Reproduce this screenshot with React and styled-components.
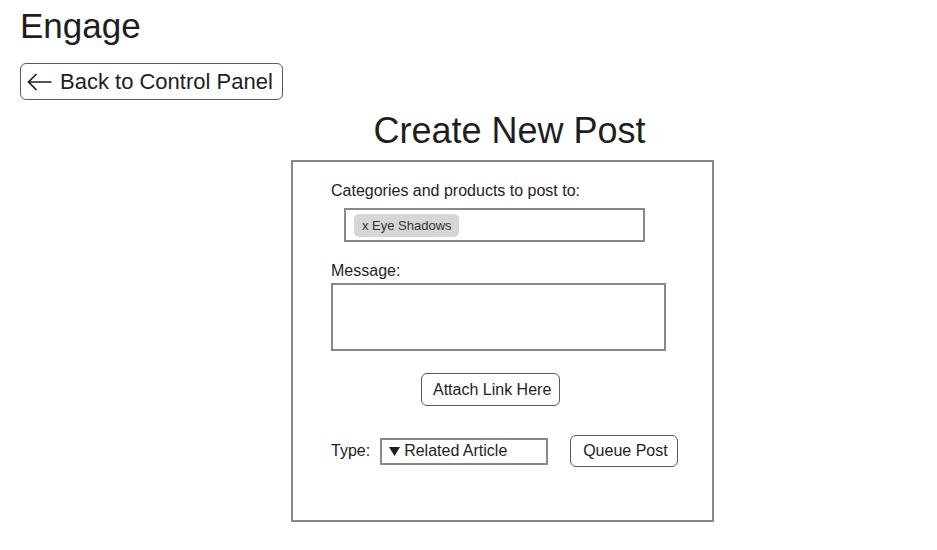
import React from "react";
import styled, { createGlobalStyle } from "styled-components";

const GlobalStyle = createGlobalStyle`
  body {
    margin: 0;
    background: #ffffff;
    font-family: "Liberation Sans", Arial, sans-serif;
    color: #1e1e1e;
  }
`;

const Page = styled.div`
  width: 937px;
  height: 550px;
  padding: 6px 0 0 20px;
  box-sizing: border-box;
`;

const Heading = styled.h1`
  margin: 0;
  font-size: 35px;
  line-height: 40px;
  font-weight: 400;
`;

const OutlineButton = styled.button`
  display: inline-flex;
  align-items: center;
  gap: ${props => props.gap || 0}px;
  box-sizing: border-box;
  height: ${props => props.h}px;
  padding: 0 ${props => props.pr}px 0 ${props => props.pl}px;
  border: 1px solid #5a5a5a;
  border-radius: 6px;
  background: #ffffff;
  color: #1e1e1e;
  font-family: "Liberation Sans", Arial, sans-serif;
  font-size: ${props => props.size}px;
  cursor: pointer;
`;

const BackRow = styled.div`
  margin-top: 17px;
  display: flex;
`;

const Main = styled.div`
  margin-top: 10px;
  padding-left: 271px;
  display: flex;
  flex-direction: column;
`;

const Title = styled.h2`
  margin: 0;
  width: 423px;
  padding-left: 14px;
  box-sizing: border-box;
  text-align: center;
  font-size: 36px;
  line-height: 42px;
  font-weight: 400;
`;

const Panel = styled.div`
  margin-top: 8px;
  width: 423px;
  height: 362px;
  box-sizing: border-box;
  border: 2px solid #888888;
  padding: 20px 0 0 38px;
  display: flex;
  flex-direction: column;
`;

const Label = styled.div`
  font-size: 16px;
  line-height: 18px;
  margin-top: ${props => props.top || 0}px;
`;

const TagBox = styled.div`
  margin: 8px 0 0 13px;
  width: 301px;
  height: 34px;
  box-sizing: border-box;
  border: 2px solid #888888;
  padding: 4px 8px;
  display: flex;
  align-items: flex-start;
`;

const Chip = styled.span`
  display: inline-flex;
  align-items: center;
  height: 23px;
  padding: 0 7px 0 8px;
  border-radius: 5px;
  background: #d6d6d6;
  color: #333333;
  font-size: 13px;
`;

const MessageBox = styled.div`
  margin-top: 3px;
  width: 335px;
  height: 68px;
  box-sizing: border-box;
  border: 2px solid #888888;
`;

const AttachRow = styled.div`
  margin-top: 22px;
  padding-left: 90px;
  display: flex;
`;

const TypeRow = styled.div`
  margin-top: 29px;
  display: flex;
  align-items: center;
  font-size: 16px;
`;

const Select = styled.div`
  margin-left: 10px;
  width: 168px;
  height: 27px;
  box-sizing: border-box;
  border: 2px solid #888888;
  padding-left: 7px;
  display: flex;
  align-items: center;
  gap: 4px;
  font-size: 16px;
`;

const QueueWrap = styled.div`
  margin-left: 22px;
  display: flex;
`;

const ArrowIcon = () => (
  <svg width="25" height="18" viewBox="0 0 25 18">
    <path d="M1.5 9 H24.5 M9.5 1 L1.5 9 L9.5 17" fill="none" stroke="#1e1e1e" strokeWidth="1.7" />
  </svg>
);

const Caret = () => (
  <svg width="11" height="9" viewBox="0 0 11 9">
    <path d="M0 0 H11 L5.5 9 Z" fill="#1e1e1e" />
  </svg>
);

export default function App() {
  return (
    <Page>
      <GlobalStyle />
      <Heading>Engage</Heading>
      <BackRow>
        <OutlineButton h={37} pl={6} pr={9} gap={8} size={22}>
          <ArrowIcon />
          Back to Control Panel
        </OutlineButton>
      </BackRow>
      <Main>
        <Title>Create New Post</Title>
        <Panel>
          <Label>Categories and products to post to:</Label>
          <TagBox>
            <Chip>x Eye Shadows</Chip>
          </TagBox>
          <Label top={20}>Message:</Label>
          <MessageBox />
          <AttachRow>
            <OutlineButton h={33} pl={11} pr={8} size={16}>
              Attach Link Here
            </OutlineButton>
          </AttachRow>
          <TypeRow>
            Type:
            <Select>
              <Caret />
              Related Article
            </Select>
            <QueueWrap>
              <OutlineButton h={32} pl={12} pr={9} size={16}>
                Queue Post
              </OutlineButton>
            </QueueWrap>
          </TypeRow>
        </Panel>
      </Main>
    </Page>
  );
}
